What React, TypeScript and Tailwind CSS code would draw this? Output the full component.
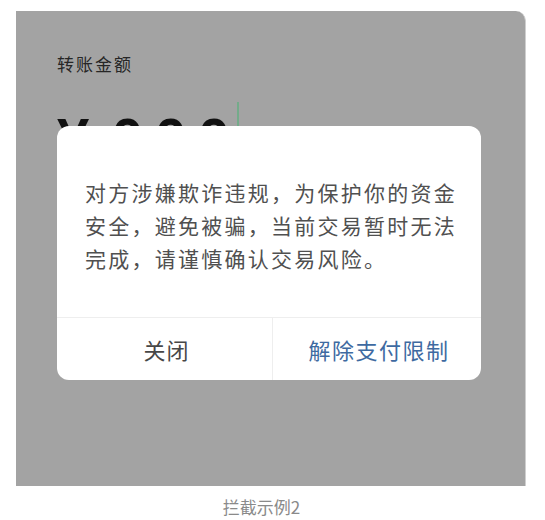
import React from 'react';

const cjk = { fontFamily: '"Noto Sans CJK SC", "Noto Sans", sans-serif' };

const lines = [
  '对方涉嫌欺诈违规，为保护你的资金',
  '安全，避免被骗，当前交易暂时无法',
  '完成，请谨慎确认交易风险。',
];

const App: React.FC = () => {
  return (
    <div className="w-[545px] h-[520px] bg-white" style={cjk}>
      <div className="pt-[11px] pl-[16px]">
        <div className="relative w-[510px] h-[475px] bg-[#a3a3a3] rounded-tr-[10px] border-r border-[#cfcfcf] overflow-hidden">
          <div className="pt-[41px] pl-[41px]">
            <div className="text-[17px] leading-[24px] tracking-[2px] text-[#262626]">转账金额</div>
            <div className="mt-[26px] flex items-start">
              <span
                className="mt-[8px] text-[58px] leading-none font-bold text-[#111]"
                style={{ fontFamily: '"Liberation Sans", Arial, sans-serif' }}
              >
                ¥
              </span>
              <span
                className="mt-[8px] ml-[22px] text-[58px] leading-none font-bold tracking-[11px] text-[#111]"
                style={{ fontFamily: '"Liberation Sans", Arial, sans-serif' }}
              >
                000
              </span>
              <span className="ml-[-4px] w-[2px] h-[60px] bg-[#74ab8a]" />
            </div>
          </div>

          {/* dialog */}
          <div className="absolute left-[41px] top-[115px] w-[424px] h-[254px] bg-white rounded-[12px] flex flex-col overflow-hidden">
            <div className="h-[191px] pt-[50px] pl-[28px] text-[21px] leading-[33px] tracking-[2.25px] text-[#505050]">
              {lines.map((l) => (
                <div key={l} className="whitespace-nowrap">
                  {l}
                </div>
              ))}
            </div>
            <div className="flex flex-1 border-t border-[#eeeeee]">
              <div className="w-[216px] pl-[4px] flex items-center justify-center text-[22px] leading-none tracking-[1px] text-[#474747] border-r border-[#eeeeee]">
                关闭
              </div>
              <div className="flex-1 pl-[4px] flex items-center justify-center text-[22px] leading-none tracking-[1.5px] text-[#3e6aa1]">
                解除支付限制
              </div>
            </div>
          </div>
        </div>
      </div>
      <div className="mt-[9px] pr-[22px] text-center text-[17px] leading-[24px] text-[#8a8a8a]">
        拦截示例2
      </div>
    </div>
  );
};

export default App;
